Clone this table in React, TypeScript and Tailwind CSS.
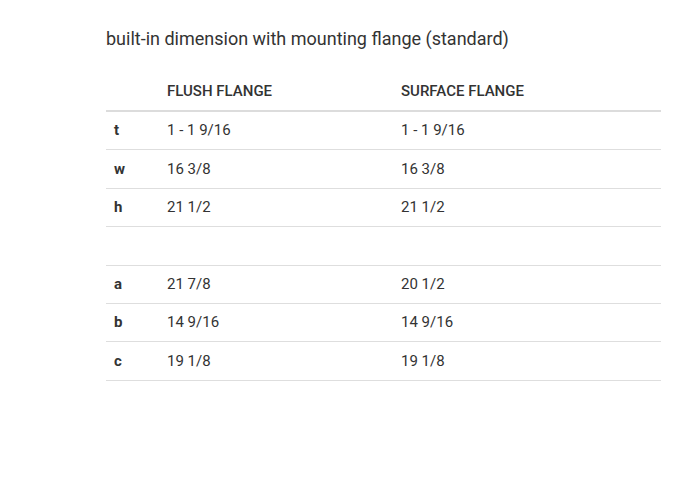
const ROWS: readonly (readonly [string, string, string])[] = [
  ['t', '1 - 1 9/16', '1 - 1 9/16'],
  ['w', '16 3/8', '16 3/8'],
  ['h', '21 1/2', '21 1/2'],
  ['', '', ''],
  ['a', '21 7/8', '20 1/2'],
  ['b', '14 9/16', '14 9/16'],
  ['c', '19 1/8', '19 1/8'],
]

const ROW = 'grid grid-cols-[53px_234px_1fr] items-center'

export default function App() {
  return (
    <div className="min-h-[488px] bg-white font-['Roboto',sans-serif] text-[#333]">
      <div className="w-[661px] pl-[106px] pt-[25px]">
        <h2 className="text-[18px] leading-[27px] font-normal">
          built-in dimension with mounting flange (standard)
        </h2>
        <div className="mt-[19px] text-[15px]">
          <div className={`${ROW} h-[41px] border-b-2 border-[#dcdcdc] pt-[1px] font-medium`}>
            <div />
            <div className="pl-2">FLUSH FLANGE</div>
            <div className="pl-2">SURFACE FLANGE</div>
          </div>
          {ROWS.map(([label, flush, surface], i) => (
            <div key={i} className={`${ROW} h-[38.4px] border-b border-[#dedede]`}>
              <div className="pl-2 font-bold">{label}</div>
              <div className="pl-2">{flush}</div>
              <div className="pl-2">{surface}</div>
            </div>
          ))}
        </div>
      </div>
    </div>
  )
}
